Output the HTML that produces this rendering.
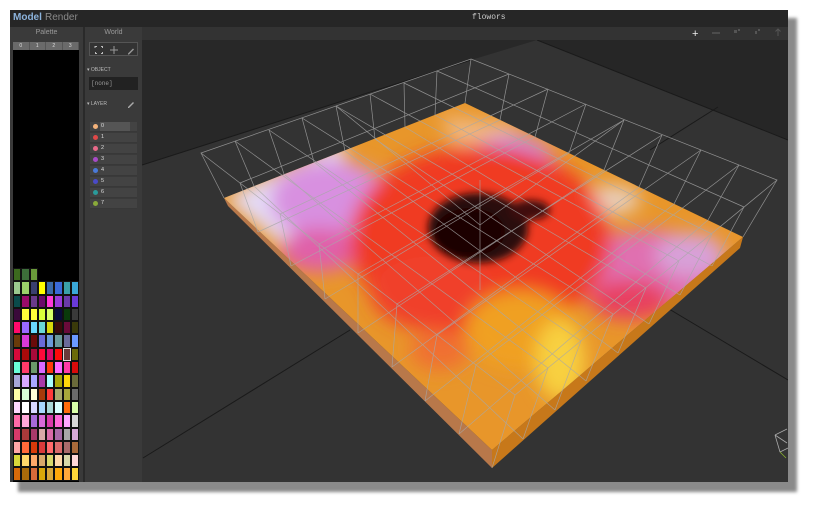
<!DOCTYPE html>
<html><head><meta charset="utf-8">
<style>
*{margin:0;padding:0;box-sizing:border-box}
body{width:813px;height:510px;background:#fff;position:relative;overflow:hidden;font-family:"Liberation Sans",sans-serif}
.shadow{position:absolute;left:18px;top:18px;width:779px;height:474px;background:#8a8a8a;filter:blur(1.5px)}
.win{position:absolute;left:10px;top:10px;width:778px;height:472px;background:#333;overflow:hidden}
.title{position:absolute;left:0;top:0;width:778px;height:17px;background:#262626}
.title .m{position:absolute;left:3px;top:2px;font-size:10px;font-weight:bold;color:#8cb3dc}
.title .r{position:absolute;left:35px;top:2px;font-size:10px;color:#8a8a8a}
.title .f{position:absolute;left:462px;top:3px;font-size:8px;color:#ccc;font-family:"Liberation Mono",monospace}
.pal{position:absolute;left:0;top:17px;width:73px;height:455px;background:#3a3a3a}
.pal .h{position:absolute;left:0;top:2px;width:73px;text-align:center;font-size:7px;color:#999}
.tabs{position:absolute;left:3px;top:15px;width:66px;height:8px;background:#6a6a6a;font-size:5px;color:#ddd;display:flex}
.tabs span{flex:1;text-align:center;line-height:8px;border-right:1px solid #555}
.blk{position:absolute;left:3px;top:23px;width:66px;height:432px;background:#000}
.grid{position:absolute;left:3px;top:241px;width:66px;display:grid;grid-template-columns:repeat(8,8.25px);grid-auto-rows:13.3px}
.grid i{display:block;border:0.5px solid #111}
.sep{position:absolute;left:73px;top:17px;width:2px;height:455px;background:#2a2a2a}
.world{position:absolute;left:75px;top:17px;width:57px;height:455px;background:#3a3a3a}
.world .h{position:absolute;left:0;top:2px;width:57px;text-align:center;font-size:7px;color:#999}
.icons{position:absolute;left:4px;top:15px;width:49px;height:14px;border:1px solid #555;background:#333;font-size:9px;color:#aaa}
.sec{position:absolute;left:2px;font-size:5px;color:#bbb}
.none{position:absolute;left:4px;top:50px;width:49px;height:13px;background:#222;font-size:6px;color:#999;font-family:"Liberation Mono",monospace;padding:3px 2px}
.row{position:absolute;left:5px;width:47px;height:10px;background:#434343;border-bottom:1px solid #383838}
.row b{position:absolute;left:3px;top:2px;width:5px;height:5px;border-radius:50%}
.row span{position:absolute;left:11px;top:1px;font-size:5.5px;color:#ddd}
</style></head><body>
<div class="shadow"></div>
<div class="win">
 <div class="title"><span class="m">Model</span><span class="r">Render</span><span class="f">flowors</span></div>
 <div class="pal"><div class="h">Palette</div>
  <div class="tabs"><span>0</span><span>1</span><span>2</span><span>3</span></div>
  <div class="blk"></div>
  <div class="grid">
<i style="background:#3c6a1e"></i><i style="background:#3d6e3a"></i><i style="background:#6a9a3a"></i><i style="background:#000;border-color:#000"></i><i style="background:#000;border-color:#000"></i><i style="background:#000;border-color:#000"></i><i style="background:#000;border-color:#000"></i><i style="background:#000;border-color:#000"></i>
<i style="background:#9bc98f"></i><i style="background:#9cd06a"></i><i style="background:#3a3f6e"></i><i style="background:#ffff00"></i><i style="background:#3a6aa8"></i><i style="background:#3a6ad8"></i><i style="background:#3aa0a8"></i><i style="background:#3aa8d8"></i>
<i style="background:#0a4a4a"></i><i style="background:#9a0a6a"></i><i style="background:#6a3a8a"></i><i style="background:#6a0a6a"></i><i style="background:#ff3ad8"></i><i style="background:#9a3ad8"></i><i style="background:#6a3aa8"></i><i style="background:#6a3ad8"></i>
<i style="background:#3a0a3a"></i><i style="background:#ffff3a"></i><i style="background:#ffff3a"></i><i style="background:#d8ff3a"></i><i style="background:#d8ff6a"></i><i style="background:#0a0a3a"></i><i style="background:#0a3a0a"></i><i style="background:#3a3a3a"></i>
<i style="background:#ff0a6a"></i><i style="background:#9a6aff"></i><i style="background:#6ad8ff"></i><i style="background:#6ad8d8"></i><i style="background:#d8d80a"></i><i style="background:#3a0a0a"></i><i style="background:#6a0a3a"></i><i style="background:#3a3a0a"></i>
<i style="background:#6a3a0a"></i><i style="background:#d83ad8"></i><i style="background:#6a0a0a"></i><i style="background:#6a6ad8"></i><i style="background:#6a9ad8"></i><i style="background:#6a9a9a"></i><i style="background:#6a6a9a"></i><i style="background:#6a9aff"></i>
<i style="background:#d80a3a"></i><i style="background:#a80a0a"></i><i style="background:#a80a3a"></i><i style="background:#ff0a3a"></i><i style="background:#d80a6a"></i><i style="background:#ff0a0a"></i><i style="background:#6a3a3a;border:1px solid #ddd"></i><i style="background:#6a6a0a"></i>
<i style="background:#6affd8"></i><i style="background:#ff3a6a"></i><i style="background:#6a9a6a"></i><i style="background:#d86aff"></i><i style="background:#ff3a0a"></i><i style="background:#ff6aff"></i><i style="background:#ff3aa8"></i><i style="background:#d80a0a"></i>
<i style="background:#a8a8d8"></i><i style="background:#d8a8ff"></i><i style="background:#a8a8ff"></i><i style="background:#a83aa8"></i><i style="background:#a8ffff"></i><i style="background:#a8a80a"></i><i style="background:#ffd80a"></i><i style="background:#6a6a3a"></i>
<i style="background:#ffffa8"></i><i style="background:#d8ffd8"></i><i style="background:#ffffd8"></i><i style="background:#a83a0a"></i><i style="background:#ff3a3a"></i><i style="background:#a8a86a"></i><i style="background:#a8a83a"></i><i style="background:#6a6a6a"></i>
<i style="background:#ffd8ff"></i><i style="background:#ffffff"></i><i style="background:#d8d8ff"></i><i style="background:#a8d8ff"></i><i style="background:#a8d8d8"></i><i style="background:#d8ffff"></i><i style="background:#ff6a0a"></i><i style="background:#d8ffa8"></i>
<i style="background:#ff6aa8"></i><i style="background:#ffa8d8"></i><i style="background:#a86ad8"></i><i style="background:#d86ad8"></i><i style="background:#d83aa8"></i><i style="background:#ff6ad8"></i><i style="background:#ffa8ff"></i><i style="background:#d8d8d8"></i>
<i style="background:#d83a6a"></i><i style="background:#a83a3a"></i><i style="background:#a83a6a"></i><i style="background:#d8a8a8"></i><i style="background:#d86aa8"></i><i style="background:#a86aa8"></i><i style="background:#a8a8a8"></i><i style="background:#d8a8d8"></i>
<i style="background:#ffa8a8"></i><i style="background:#ff6a3a"></i><i style="background:#d83a0a"></i><i style="background:#d83a3a"></i><i style="background:#ff6a6a"></i><i style="background:#d86a6a"></i><i style="background:#a86a6a"></i><i style="background:#a86a3a"></i>
<i style="background:#d8d83a"></i><i style="background:#ffd86a"></i><i style="background:#ffa86a"></i><i style="background:#d8a86a"></i><i style="background:#d8d86a"></i><i style="background:#ffd8a8"></i><i style="background:#d8d8a8"></i><i style="background:#ffd8d8"></i>
<i style="background:#d86a0a"></i><i style="background:#a86a0a"></i><i style="background:#d86a3a"></i><i style="background:#d8a80a"></i><i style="background:#d8a83a"></i><i style="background:#ffa80a"></i><i style="background:#ffa83a"></i><i style="background:#ffd83a"></i>
  </div>
 </div>
 <div class="sep"></div>
 <div class="world"><div class="h">World</div>
  <div class="icons"><svg width="49" height="14" viewBox="0 0 49 14"><g fill="none" stroke="#bbb" stroke-width="1"><path d="M5 5V3.5H7M11 3.5h1.5V5M12.5 9v1.5H11M7 10.5H5.5V9"/><path d="M24 3v8M20 7h8" stroke="#999"/><path d="M38 10.5l5-5 1 1-5 5h-1z" fill="#999" stroke="none"/></g></svg></div>
  <div class="sec" style="top:40px">▾ OBJECT</div>
  <div class="none">[none]</div>
  <div class="sec" style="top:74px">▾ LAYER</div>
  <svg style="position:absolute;left:42px;top:73px" width="8" height="8"><path d="M1 7l5-5 1 1-5 5H1z" fill="#aaa"/></svg>
  <div class="row" style="top:95px"><b style="background:#f4b27a"></b><span style="display:block;left:10px;top:0;width:30px;height:9px;background:#555;padding:1px">0</span></div>
  <div class="row" style="top:106px"><b style="background:#e04848"></b><span>1</span></div>
  <div class="row" style="top:117px"><b style="background:#e86a8a"></b><span>2</span></div>
  <div class="row" style="top:128px"><b style="background:#a84ac8"></b><span>3</span></div>
  <div class="row" style="top:139px"><b style="background:#4a7ad8"></b><span>4</span></div>
  <div class="row" style="top:150px"><b style="background:#4a4ac8"></b><span>5</span></div>
  <div class="row" style="top:161px"><b style="background:#2a9a9a"></b><span>6</span></div>
  <div class="row" style="top:172px"><b style="background:#8aaa3a"></b><span>7</span></div>
 </div>
</div>
<svg style="position:absolute;left:0;top:0" width="813" height="510" viewBox="0 0 813 510">
 <defs>
  <clipPath id="vp"><rect x="142" y="40" width="646" height="442"/></clipPath>
  <clipPath id="pl"><polygon points="465,103 743,237 492,450 224,198"/></clipPath>
  <filter id="bl" x="-20%" y="-20%" width="140%" height="140%"><feGaussianBlur stdDeviation="9"/></filter>
  <filter id="bs" x="-20%" y="-20%" width="140%" height="140%"><feGaussianBlur stdDeviation="4"/></filter>
 </defs>
 <g clip-path="url(#vp)">
  <rect x="142" y="40" width="646" height="442" fill="#333"/>
  <polygon points="142,40 537,40 788,140 788,40" fill="#262626"/>
  <polygon points="142,40 537,40 471,60 142,165" fill="#282828"/>
  <g stroke="#1a1a1a" stroke-width="1">
   <line x1="142" y1="165" x2="471" y2="60"/><line x1="537" y1="40" x2="788" y2="140"/>
   <line x1="143" y1="458" x2="350" y2="330"/><line x1="659" y1="303" x2="788" y2="380"/>
   <line x1="718" y1="107" x2="650" y2="150"/>
  </g>
  <polygon points="224,198 492,450 492,468 228,206" fill="#b8784a"/>
  <polygon points="743,237 492,450 492,468 740,248" fill="#c7781a"/>
  <g clip-path="url(#pl)">
   <rect x="200" y="90" width="560" height="380" fill="#e8962a"/>
   <g filter="url(#bl)">
    <polygon points="440,115 520,125 470,180" fill="#f0b880"/>
    <polygon points="224,198 300,160 340,140 360,200 300,260" fill="#e4dcf8"/>
    <ellipse cx="330" cy="200" rx="60" ry="40" fill="#d890e0"/>
    <ellipse cx="510" cy="165" rx="45" ry="30" fill="#c890e8"/>
    <ellipse cx="320" cy="250" rx="40" ry="22" fill="#e060a8"/>
    <ellipse cx="650" cy="270" rx="75" ry="40" fill="#e070b0"/>
    <ellipse cx="690" cy="255" rx="35" ry="22" fill="#d8a0d8"/>
    <ellipse cx="610" cy="200" rx="30" ry="14" fill="#e8d0c0"/>
    <ellipse cx="480" cy="240" rx="130" ry="95" fill="#f03a20"/>
    <ellipse cx="430" cy="290" rx="60" ry="40" fill="#f0402a"/>
    <ellipse cx="520" cy="330" rx="55" ry="40" fill="#f0a020"/>
    <ellipse cx="560" cy="360" rx="25" ry="40" fill="#f8d040"/>
    <ellipse cx="440" cy="350" rx="30" ry="20" fill="#f07030"/>
    <ellipse cx="630" cy="300" rx="40" ry="20" fill="#e84060"/>
   </g>
   <g filter="url(#bs)">
    <ellipse cx="478" cy="228" rx="50" ry="35" fill="#2a0a08"/>
    <ellipse cx="470" cy="232" rx="35" ry="24" fill="#1a0606"/>
    <ellipse cx="530" cy="210" rx="20" ry="10" fill="#401008"/>
   </g>
  </g>
  <g stroke="#a8a8a8" stroke-width="0.7" fill="none" opacity="0.8">
   <polygon points="471,59 777,180 515,395 201,153"/>
   <line x1="437" y1="71" x2="744" y2="207"/><line x1="404" y1="83" x2="712" y2="234"/><line x1="370" y1="94" x2="679" y2="261"/><line x1="336" y1="106" x2="646" y2="288"/><line x1="302" y1="118" x2="613" y2="314"/><line x1="269" y1="130" x2="581" y2="341"/><line x1="235" y1="141" x2="548" y2="368"/>
   <line x1="509" y1="74" x2="240" y2="183"/><line x1="548" y1="89" x2="280" y2="214"/><line x1="586" y1="104" x2="319" y2="244"/><line x1="624" y1="120" x2="358" y2="274"/><line x1="662" y1="135" x2="397" y2="304"/><line x1="701" y1="150" x2="437" y2="335"/><line x1="739" y1="165" x2="476" y2="365"/>
   <line x1="435" y1="115" x2="712" y2="266"/><line x1="405" y1="127" x2="680" y2="295"/><line x1="375" y1="139" x2="649" y2="324"/><line x1="345" y1="151" x2="618" y2="353"/><line x1="314" y1="162" x2="586" y2="381"/><line x1="284" y1="174" x2="555" y2="410"/><line x1="254" y1="186" x2="523" y2="439"/>
   <line x1="500" y1="120" x2="258" y2="232"/><line x1="535" y1="137" x2="291" y2="266"/><line x1="569" y1="153" x2="325" y2="299"/><line x1="604" y1="170" x2="358" y2="333"/><line x1="639" y1="187" x2="392" y2="367"/><line x1="674" y1="204" x2="425" y2="401"/><line x1="708" y1="220" x2="459" y2="434"/>
   <line x1="471" y1="59" x2="465" y2="103"/><line x1="437" y1="71" x2="435" y2="115"/><line x1="404" y1="83" x2="405" y2="127"/><line x1="370" y1="94" x2="375" y2="139"/><line x1="336" y1="106" x2="345" y2="151"/><line x1="302" y1="118" x2="314" y2="162"/><line x1="269" y1="130" x2="284" y2="174"/><line x1="235" y1="141" x2="254" y2="186"/><line x1="201" y1="153" x2="224" y2="198"/>
   <line x1="509" y1="74" x2="500" y2="120"/><line x1="548" y1="89" x2="535" y2="137"/><line x1="586" y1="104" x2="569" y2="153"/><line x1="624" y1="120" x2="604" y2="170"/><line x1="662" y1="135" x2="639" y2="187"/><line x1="701" y1="150" x2="674" y2="204"/><line x1="739" y1="165" x2="708" y2="220"/><line x1="777" y1="180" x2="743" y2="237"/>
   <line x1="744" y1="207" x2="712" y2="266"/><line x1="712" y1="234" x2="680" y2="295"/><line x1="679" y1="261" x2="649" y2="324"/><line x1="646" y1="288" x2="618" y2="353"/><line x1="613" y1="314" x2="586" y2="381"/><line x1="581" y1="341" x2="555" y2="410"/><line x1="548" y1="368" x2="523" y2="439"/><line x1="515" y1="395" x2="492" y2="468"/>
   <line x1="240" y1="183" x2="258" y2="232"/><line x1="280" y1="214" x2="291" y2="266"/><line x1="319" y1="244" x2="325" y2="299"/><line x1="358" y1="274" x2="358" y2="333"/><line x1="397" y1="304" x2="392" y2="367"/><line x1="437" y1="335" x2="425" y2="401"/><line x1="476" y1="365" x2="459" y2="434"/>
   <line x1="624" y1="120" x2="480" y2="225"/><line x1="336" y1="106" x2="480" y2="225"/><line x1="480" y1="180" x2="480" y2="290"/>
  </g>
  <g stroke="#aaa" stroke-width="0.8" fill="none"><path d="M775 435l12-6M775 435l5 17M780 452l8-4M775 435l12 8"/><path d="M780 452l6 6" stroke="#8ab030"/></g>
 </g>
 <g font-family="Liberation Sans" font-size="11" fill="#eee"><text x="692" y="37">+</text></g>
 <g stroke="#666" stroke-width="1"><line x1="712" y1="33" x2="720" y2="33"/></g>
 <g fill="#555"><rect x="734" y="30" width="3" height="3"/><rect x="738" y="29" width="2" height="2"/><rect x="755" y="31" width="2" height="3"/><rect x="758" y="29" width="2" height="2"/></g>
 <path d="M778 36v-7M775.5 31.5l2.5-2.5 2.5 2.5" stroke="#555" fill="none"/>
</svg>
</body></html>
